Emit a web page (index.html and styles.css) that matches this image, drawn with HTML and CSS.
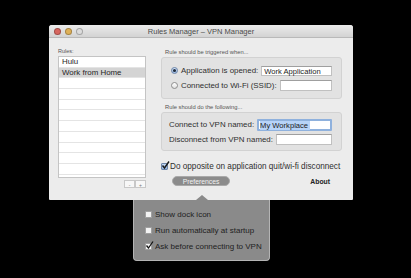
FILE: index.html
```html
<!DOCTYPE html>
<html lang="en">
<head>
    <meta charset="UTF-8">
    <meta name="viewport" content="width=device-width, initial-scale=1.0">
    <title>Rules Manager - VPN Manager</title>
    <link rel="stylesheet" href="styles.css">
</head>
<body>

<div class="window">
    <!-- Title bar -->
    <div class="titlebar">
        <div class="lights">
            <span class="light red"></span>
            <span class="light yellow"></span>
            <span class="light gray"></span>
        </div>
        <div class="title">Rules Manager &ndash; VPN Manager</div>
    </div>

    <div class="window-body">
        <!-- Left: list of rules -->
        <div class="rules-col">
            <div class="small-label">Rules:</div>
            <div class="rule-list">
                <div class="rule-row">Hulu</div>
                <div class="rule-row selected">Work from Home</div>
                <div class="rule-row"></div>
                <div class="rule-row"></div>
                <div class="rule-row"></div>
                <div class="rule-row"></div>
                <div class="rule-row"></div>
                <div class="rule-row"></div>
                <div class="rule-row"></div>
                <div class="rule-row"></div>
                <div class="rule-row"></div>
            </div>
            <div class="list-buttons">
                <span class="mini-btn">-</span><span class="mini-btn">+</span>
            </div>
        </div>

        <!-- Right: rule settings -->
        <div class="settings-col">
            <div class="small-label group-label">Rule should be triggered when...</div>
            <div class="group trigger-group">
                <div class="field-row">
                    <span class="radio checked"></span>
                    <span class="field-label">Application is opened:</span>
                    <span class="text-input">Work Application</span>
                </div>
                <div class="field-row">
                    <span class="radio"></span>
                    <span class="field-label">Connected to Wi-Fi (SSID):</span>
                    <span class="text-input tall"></span>
                </div>
            </div>

            <div class="small-label group-label second">Rule should do the following...</div>
            <div class="group action-group">
                <div class="field-row">
                    <span class="field-label">Connect to VPN named:</span>
                    <span class="text-input focused"><span class="sel">My Workplace</span></span>
                </div>
                <div class="field-row">
                    <span class="field-label">Disconnect from VPN named:</span>
                    <span class="text-input tall"></span>
                </div>
            </div>

            <div class="check-row">
                <span class="checkbox blue">
                    <svg width="9" height="9" viewBox="0 0 9 9"><path d="M1.5 4.5 L3.5 7 L8 0.5" fill="none" stroke="#1a1a1a" stroke-width="1.4"/></svg>
                </span>
                <span>Do opposite on application quit/wi-fi disconnect</span>
            </div>

            <div class="bottom-row">
                <span class="pref-btn">Preferences</span>
                <span class="about">About</span>
            </div>
        </div>
    </div>
</div>

<!-- Preferences popover -->
<div class="popover">
    <span class="popover-arrow"></span>
    <div class="pop-row"><span class="checkbox"></span>Show dock icon</div>
    <div class="pop-row"><span class="checkbox"></span>Run automatically at startup</div>
    <div class="pop-row">
        <span class="checkbox">
            <svg width="9" height="9" viewBox="0 0 9 9"><path d="M1.5 4.5 L3.5 7 L8 0.5" fill="none" stroke="#111" stroke-width="1.3"/></svg>
        </span>Ask before connecting to VPN
    </div>
</div>

</body>
</html>
```

FILE: styles.css
```css
body {
    margin: 0;
    padding: 25px 0 0 0;
    background-color: #000;
    font-family: "Liberation Sans", Arial, sans-serif;
    color: #222;
    height: 278px;
    box-sizing: border-box;
    overflow: hidden;
}

.window {
    width: 304px;
    height: 175px;
    margin-left: 49px;
    background-color: #ececec;
    border-radius: 3px 3px 1px 1px;
    overflow: hidden;
}

.titlebar {
    height: 13px;
    display: flex;
    align-items: center;
    position: relative;
    background: linear-gradient(#ebebeb, #d3d3d3);
    border-bottom: 1px solid #b9b9b9;
    box-sizing: border-box;
}

.lights {
    display: flex;
    gap: 4px;
    padding-left: 5px;
}

.light {
    width: 7px;
    height: 7px;
    border-radius: 50%;
    box-sizing: border-box;
    border: 1px solid rgba(0, 0, 0, 0.25);
}

.light.red { background: #d7665f; }
.light.yellow { background: #dfb158; }
.light.gray { background: #dcdcdc; }

.title {
    position: absolute;
    left: 0;
    right: 0;
    text-align: center;
    font-size: 7.5px;
    color: #4b4b4b;
}

.window-body {
    display: flex;
    padding: 9px 11px 0 9px;
}

.small-label {
    font-size: 5.5px;
    color: #555;
    height: 9px;
    line-height: 9px;
}

/* Rules list */
.rules-col {
    width: 88px;
}

.rule-list {
    height: 122px;
    background: #fff;
    border: 1px solid #c4c4c4;
    box-sizing: border-box;
    overflow: hidden;
}

.rule-row {
    height: 10.7px;
    line-height: 10.7px;
    font-size: 7.9px;
    padding-left: 3px;
    border-bottom: 1px solid #e4e4e4;
    box-sizing: border-box;
    color: #262626;
}

.rule-row.selected {
    background: #d4d4d4;
}

.list-buttons {
    display: flex;
    justify-content: flex-end;
    margin-top: 2px;
}

.mini-btn {
    width: 11px;
    height: 8px;
    line-height: 8px;
    text-align: center;
    font-size: 5px;
    color: #777;
    background: #f7f7f7;
    border: 1px solid #c8c8c8;
    box-sizing: border-box;
}

/* Settings */
.settings-col {
    width: 181px;
    margin-left: 15px;
    font-size: 7.9px;
}

.group-label {
    padding-left: 4px;
    height: 10px;
    line-height: 10px;
    font-size: 5.8px;
}

.group-label.second {
    height: 13px;
    line-height: 16px;
}

.group {
    background: #e2e2e2;
    border: 1px solid #d2d2d2;
    border-radius: 3px;
    box-sizing: border-box;
    display: flex;
    flex-direction: column;
    justify-content: center;
    gap: 4px;
    padding: 0 9px 0 9px;
}

.trigger-group {
    height: 42px;
}

.action-group {
    height: 39px;
    gap: 3px;
    padding-left: 7px;
}

.field-row {
    display: flex;
    align-items: center;
    gap: 3px;
    color: #2f2f2f;
}

.field-label {
    white-space: nowrap;
}

.text-input {
    flex: 1;
    height: 10px;
    line-height: 10px;
    background: #fff;
    border: 1px solid #c0c0c0;
    border-top-color: #9f9f9f;
    box-sizing: border-box;
    padding-left: 2px;
    font-size: 7.6px;
    white-space: nowrap;
    color: #1a1a1a;
}

.text-input.tall {
    height: 11px;
}

.text-input.focused {
    height: 12px;
    line-height: 9px;
    border: 2px solid #8fb1dd;
    border-radius: 1px;
    padding-left: 1px;
}

.sel {
    background: #b7d3f8;
    padding-right: 2px;
}

.radio {
    width: 7px;
    height: 7px;
    border-radius: 50%;
    border: 1px solid #8d8d8d;
    background: linear-gradient(#ffffff, #e0e0e0);
    box-sizing: border-box;
    display: flex;
    align-items: center;
    justify-content: center;
    flex-shrink: 0;
}

.radio.checked {
    background: linear-gradient(#cfe0f5, #9fbce6);
    border-color: #6b84a8;
}

.radio.checked::after {
    content: "";
    width: 3px;
    height: 3px;
    border-radius: 50%;
    background: #1e2a3a;
}

.checkbox {
    width: 7px;
    height: 7px;
    border: 1px solid #8e8e8e;
    background: #fafafa;
    box-sizing: border-box;
    border-radius: 1px;
    position: relative;
    flex-shrink: 0;
}

.checkbox svg {
    position: absolute;
    left: -1px;
    top: -3px;
}

.checkbox.blue {
    background: linear-gradient(#c6dbf5, #8fb1e0);
    border-color: #6f87aa;
}

.check-row {
    display: flex;
    align-items: center;
    gap: 2px;
    margin-top: 11px;
    white-space: nowrap;
    color: #2f2f2f;
    font-size: 8.2px;
}

.bottom-row {
    display: flex;
    align-items: center;
    margin-top: 5px;
    padding-left: 11px;
}

.pref-btn {
    width: 58px;
    height: 10px;
    line-height: 9px;
    border-radius: 5px;
    background: #8b8b8b;
    border: 1px solid #a9a9a9;
    box-sizing: border-box;
    color: #f2f2f2;
    font-size: 6.8px;
    text-align: center;
}

.about {
    margin-left: auto;
    margin-right: 12px;
    font-weight: bold;
    font-size: 6.8px;
    color: #222;
}

/* Popover */
.popover {
    position: relative;
    width: 137px;
    height: 61px;
    margin-left: 133px;
    background: #8a8a8a;
    border: 1px solid #b4b4b4;
    border-top: none;
    border-radius: 0 0 4px 4px;
    box-sizing: border-box;
    padding: 10px 0 0 11px;
    display: flex;
    flex-direction: column;
    gap: 7px;
}

.popover-arrow {
    position: absolute;
    left: 62px;
    top: -5px;
    width: 0;
    height: 0;
    border-left: 6px solid transparent;
    border-right: 6px solid transparent;
    border-bottom: 5px solid #8a8a8a;
}

.pop-row {
    display: flex;
    align-items: center;
    gap: 3px;
    font-size: 8px;
    color: #1e1e1e;
    height: 9px;
}

.pop-row .checkbox {
    width: 7px;
    height: 7px;
    border-color: #a0a0a0;
    background: #f3f3f3;
}
```
